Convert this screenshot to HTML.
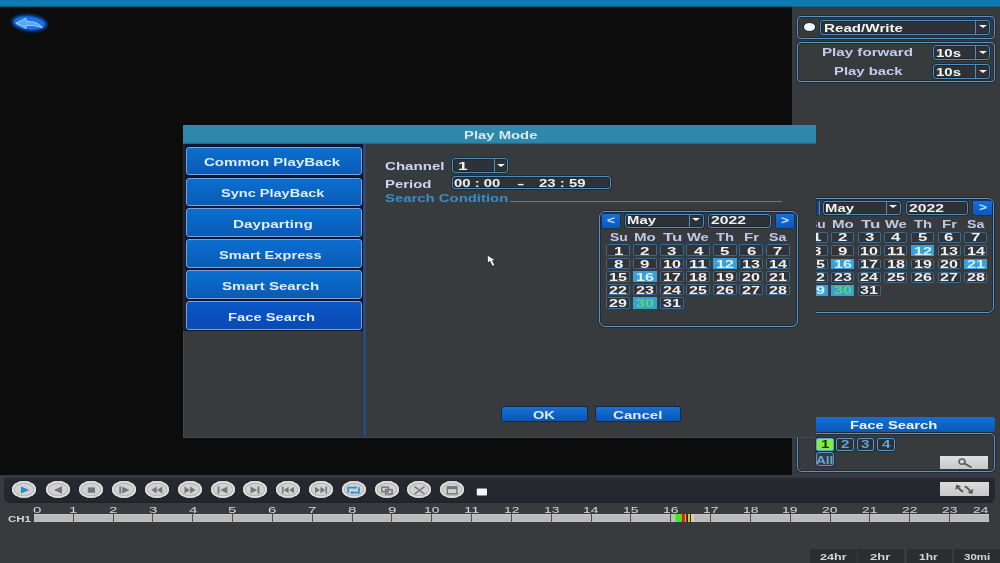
<!DOCTYPE html>
<html><head><meta charset="utf-8">
<style>
*{margin:0;padding:0;box-sizing:border-box}
html,body{width:1000px;height:563px;overflow:hidden;background:#0c0c0c;font-family:"Liberation Sans",sans-serif}
div,span{position:absolute}
.t{white-space:nowrap;line-height:1;transform-origin:0 0}
.bx{border:1.5px solid #5e94c0;border-radius:4px;box-shadow:0 0 0 1px rgba(14,30,52,.55),inset 0 0 0 1px rgba(14,30,52,.55)}
.dd{border:1.5px solid #4f8dbc;border-radius:3px;background:#2e3135;box-shadow:0 0 0 1px rgba(14,30,52,.55),inset 0 0 0 1px rgba(14,30,52,.5)}
.sep{width:1.2px;background:#4f8dbc}
.arr{width:0;height:0;border-left:4.2px solid transparent;border-right:4.2px solid transparent;border-top:3.6px solid #f4f4f4}
.btn{border:1px solid #7ea2d6;border-radius:3px;background:linear-gradient(#0b6fd0,#0a5bb5)}
.cb{background:linear-gradient(#1670d8,#0a58c0);border-radius:1px;box-shadow:0 0 0 .6px #0a2850}
.cell{border:1px solid #3a6a92;border-radius:1.5px;background:#303337}
.hl{background:#3a9ed8;border-color:#3a9ed8;border-radius:0}
.ell{border-radius:50%;background:#d2d2d2;box-shadow:inset 0 0 0 1.8px #dedede, inset 0 0 0 2.8px #b2b2b2, 0 0 1px #000}
#wrap{left:0;top:0;width:1000px;height:563px;overflow:hidden;filter:blur(0.3px)}
</style></head><body><div id="wrap">

<div style="left:792px;top:0;width:208px;height:563px;background:#383b3e"></div>
<div style="left:0;top:0;width:1000px;height:9px;background:linear-gradient(#0d7bb0 0,#0d7bb0 5.3px,rgba(26,114,160,.85) 6.3px,rgba(20,60,90,.35) 7.5px,rgba(12,12,12,0) 8.5px)"></div>
<div style="left:0;top:475px;width:1000px;height:88px;background:#383b3e"></div>
<svg style="position:absolute;left:0;top:0" width="60" height="45" viewBox="0 0 60 45">
<defs><filter id="bl" x="-50%" y="-50%" width="200%" height="200%"><feGaussianBlur stdDeviation="1.8"/></filter></defs>
<ellipse cx="29.5" cy="23" rx="17.5" ry="7.8" fill="#1060d8" filter="url(#bl)" transform="rotate(6 29.5 23)"/>
<ellipse cx="29.5" cy="23" rx="15" ry="6.4" fill="#1a70ea" transform="rotate(6 29.5 23)"/>
<path d="M15.8 23.2 L26 18.2 L26 21.2 Q37.5 21 42.4 27.6 Q36 25 26 25.4 L26 28.4 Z" fill="#58a8f4" stroke="#a8d6ff" stroke-width="0.9" stroke-linejoin="round"/>
</svg>
<div class="bx" style="left:797px;top:15.5px;width:197.5px;height:23.5px"></div>
<div style="left:803.6px;top:23.4px;width:11.2px;height:7.8px;border-radius:50%;background:radial-gradient(#f4fbff 40%,#c8ecff);box-shadow:0 0 0 1px #12283c"></div>
<div class="dd" style="left:820px;top:20px;width:170px;height:15px"></div>
<div class="sep" style="left:975px;top:20px;height:15px"></div>
<div class="arr" style="left:978.8px;top:24.9px"></div>
<span class="t" style="left:823.60px;top:22.99px;font-size:11px;font-weight:bold;color:#f4f4f4;transform:scaleX(1.3798);">Read/Write</span>
<div class="bx" style="left:797px;top:42.4px;width:197.5px;height:40px"></div>
<span class="t" style="left:821.60px;top:47.39px;font-size:11px;font-weight:bold;color:#c4cbee;transform:scaleX(1.3768);">Play forward</span>
<span class="t" style="left:833.50px;top:66.09px;font-size:11px;font-weight:bold;color:#c4cbee;transform:scaleX(1.3515);">Play back</span>
<div class="dd" style="left:933.4px;top:44.8px;width:56.6px;height:15px"></div>
<div class="sep" style="left:975px;top:44.8px;height:15px"></div>
<div class="arr" style="left:978.8px;top:51.0px"></div>
<div class="dd" style="left:933.4px;top:64px;width:56.6px;height:15px"></div>
<div class="sep" style="left:975px;top:64px;height:15px"></div>
<div class="arr" style="left:978.8px;top:70.2px"></div>
<span class="t" style="left:936.00px;top:47.59px;font-size:11px;font-weight:bold;color:#f4f4f4;transform:scaleX(1.3622);">10s</span>
<span class="t" style="left:936.00px;top:66.79px;font-size:11px;font-weight:bold;color:#f4f4f4;transform:scaleX(1.3622);">10s</span>
<div class="bx" style="left:797px;top:198.3px;width:197.29999999999995px;height:114.69999999999999px;border-radius:6px"></div>
<div class="cb" style="left:800px;top:200.7px;width:19.5px;height:14.300000000000011px"></div>
<div class="cb" style="left:973px;top:200.7px;width:19.200000000000045px;height:14.300000000000011px"></div>
<div class="dd" style="left:823.3px;top:200.7px;width:77.70000000000005px;height:14.300000000000011px"></div>
<div class="sep" style="left:886px;top:200.7px;height:14.300000000000011px"></div>
<div class="arr" style="left:889.3px;top:205.45px"></div>
<div class="dd" style="left:905.9px;top:200.7px;width:62.30000000000007px;height:14.300000000000011px"></div>
<span class="t" style="left:805.75px;top:203.08px;font-size:10px;font-weight:bold;color:#c8e4ff;transform:scaleX(1.3699);">&lt;</span>
<span class="t" style="left:978.60px;top:203.08px;font-size:10px;font-weight:bold;color:#c8e4ff;transform:scaleX(1.3699);">&gt;</span>
<span class="t" style="left:825.10px;top:202.54px;font-size:11px;font-weight:bold;color:#f2f2f2;transform:scaleX(1.3506);">May</span>
<span class="t" style="left:908.70px;top:202.54px;font-size:11px;font-weight:bold;color:#f2f2f2;transform:scaleX(1.4262);">2022</span>
<span class="t" style="left:808.00px;top:219.29px;font-size:11px;font-weight:bold;color:#c0c8ea;transform:scaleX(1.2592);">Su</span>
<span class="t" style="left:832.40px;top:219.29px;font-size:11px;font-weight:bold;color:#c0c8ea;transform:scaleX(1.3726);">Mo</span>
<span class="t" style="left:860.80px;top:219.29px;font-size:11px;font-weight:bold;color:#c0c8ea;transform:scaleX(1.5370);">Tu</span>
<span class="t" style="left:885.20px;top:219.29px;font-size:11px;font-weight:bold;color:#c0c8ea;transform:scaleX(1.3373);">We</span>
<span class="t" style="left:913.70px;top:219.29px;font-size:11px;font-weight:bold;color:#c0c8ea;transform:scaleX(1.3469);">Th</span>
<span class="t" style="left:941.80px;top:219.29px;font-size:11px;font-weight:bold;color:#c0c8ea;transform:scaleX(1.3636);">Fr</span>
<span class="t" style="left:966.60px;top:219.29px;font-size:11px;font-weight:bold;color:#c0c8ea;transform:scaleX(1.2858);">Sa</span>
<div class="cell" style="left:804.80px;top:232.10px;width:23px;height:10.6px"></div>
<span class="t" style="left:811.60px;top:232.21px;font-size:10.5px;font-weight:bold;color:#f0f0f0;transform:scaleX(1.6097);">1</span>
<div class="cell" style="left:831.34px;top:232.10px;width:23px;height:10.6px"></div>
<span class="t" style="left:838.14px;top:232.21px;font-size:10.5px;font-weight:bold;color:#f0f0f0;transform:scaleX(1.6097);">2</span>
<div class="cell" style="left:857.88px;top:232.10px;width:23px;height:10.6px"></div>
<span class="t" style="left:864.68px;top:232.21px;font-size:10.5px;font-weight:bold;color:#f0f0f0;transform:scaleX(1.6097);">3</span>
<div class="cell" style="left:884.42px;top:232.10px;width:23px;height:10.6px"></div>
<span class="t" style="left:891.22px;top:232.21px;font-size:10.5px;font-weight:bold;color:#f0f0f0;transform:scaleX(1.6097);">4</span>
<div class="cell" style="left:910.96px;top:232.10px;width:23px;height:10.6px"></div>
<span class="t" style="left:917.76px;top:232.21px;font-size:10.5px;font-weight:bold;color:#f0f0f0;transform:scaleX(1.6097);">5</span>
<div class="cell" style="left:937.50px;top:232.10px;width:23px;height:10.6px"></div>
<span class="t" style="left:944.30px;top:232.21px;font-size:10.5px;font-weight:bold;color:#f0f0f0;transform:scaleX(1.6097);">6</span>
<div class="cell" style="left:964.04px;top:232.10px;width:23px;height:10.6px"></div>
<span class="t" style="left:970.84px;top:232.21px;font-size:10.5px;font-weight:bold;color:#f0f0f0;transform:scaleX(1.6097);">7</span>
<div class="cell" style="left:804.80px;top:245.40px;width:23px;height:10.6px"></div>
<span class="t" style="left:811.60px;top:245.51px;font-size:10.5px;font-weight:bold;color:#f0f0f0;transform:scaleX(1.6097);">8</span>
<div class="cell" style="left:831.34px;top:245.40px;width:23px;height:10.6px"></div>
<span class="t" style="left:838.14px;top:245.51px;font-size:10.5px;font-weight:bold;color:#f0f0f0;transform:scaleX(1.6097);">9</span>
<div class="cell" style="left:857.88px;top:245.40px;width:23px;height:10.6px"></div>
<span class="t" style="left:860.43px;top:245.51px;font-size:10.5px;font-weight:bold;color:#f0f0f0;transform:scaleX(1.5326);">10</span>
<div class="cell" style="left:884.42px;top:245.40px;width:23px;height:10.6px"></div>
<span class="t" style="left:886.97px;top:245.51px;font-size:10.5px;font-weight:bold;color:#f0f0f0;transform:scaleX(1.6126);">11</span>
<div class="cell hl" style="left:910.96px;top:245.40px;width:23px;height:10.6px"></div>
<span class="t" style="left:913.51px;top:245.51px;font-size:10.5px;font-weight:bold;color:#d4f2ff;transform:scaleX(1.5326);">12</span>
<div class="cell" style="left:937.50px;top:245.40px;width:23px;height:10.6px"></div>
<span class="t" style="left:940.05px;top:245.51px;font-size:10.5px;font-weight:bold;color:#f0f0f0;transform:scaleX(1.5326);">13</span>
<div class="cell" style="left:964.04px;top:245.40px;width:23px;height:10.6px"></div>
<span class="t" style="left:966.59px;top:245.51px;font-size:10.5px;font-weight:bold;color:#f0f0f0;transform:scaleX(1.5326);">14</span>
<div class="cell" style="left:804.80px;top:258.70px;width:23px;height:10.6px"></div>
<span class="t" style="left:807.35px;top:258.81px;font-size:10.5px;font-weight:bold;color:#f0f0f0;transform:scaleX(1.5326);">15</span>
<div class="cell hl" style="left:831.34px;top:258.70px;width:23px;height:10.6px"></div>
<span class="t" style="left:833.89px;top:258.81px;font-size:10.5px;font-weight:bold;color:#d4f2ff;transform:scaleX(1.5326);">16</span>
<div class="cell" style="left:857.88px;top:258.70px;width:23px;height:10.6px"></div>
<span class="t" style="left:860.43px;top:258.81px;font-size:10.5px;font-weight:bold;color:#f0f0f0;transform:scaleX(1.5326);">17</span>
<div class="cell" style="left:884.42px;top:258.70px;width:23px;height:10.6px"></div>
<span class="t" style="left:886.97px;top:258.81px;font-size:10.5px;font-weight:bold;color:#f0f0f0;transform:scaleX(1.5326);">18</span>
<div class="cell" style="left:910.96px;top:258.70px;width:23px;height:10.6px"></div>
<span class="t" style="left:913.51px;top:258.81px;font-size:10.5px;font-weight:bold;color:#f0f0f0;transform:scaleX(1.5326);">19</span>
<div class="cell" style="left:937.50px;top:258.70px;width:23px;height:10.6px"></div>
<span class="t" style="left:940.05px;top:258.81px;font-size:10.5px;font-weight:bold;color:#f0f0f0;transform:scaleX(1.5326);">20</span>
<div class="cell hl" style="left:964.04px;top:258.70px;width:23px;height:10.6px"></div>
<span class="t" style="left:966.59px;top:258.81px;font-size:10.5px;font-weight:bold;color:#d4f2ff;transform:scaleX(1.5326);">21</span>
<div class="cell" style="left:804.80px;top:272.00px;width:23px;height:10.6px"></div>
<span class="t" style="left:807.35px;top:272.11px;font-size:10.5px;font-weight:bold;color:#f0f0f0;transform:scaleX(1.5326);">22</span>
<div class="cell" style="left:831.34px;top:272.00px;width:23px;height:10.6px"></div>
<span class="t" style="left:833.89px;top:272.11px;font-size:10.5px;font-weight:bold;color:#f0f0f0;transform:scaleX(1.5326);">23</span>
<div class="cell" style="left:857.88px;top:272.00px;width:23px;height:10.6px"></div>
<span class="t" style="left:860.43px;top:272.11px;font-size:10.5px;font-weight:bold;color:#f0f0f0;transform:scaleX(1.5326);">24</span>
<div class="cell" style="left:884.42px;top:272.00px;width:23px;height:10.6px"></div>
<span class="t" style="left:886.97px;top:272.11px;font-size:10.5px;font-weight:bold;color:#f0f0f0;transform:scaleX(1.5326);">25</span>
<div class="cell" style="left:910.96px;top:272.00px;width:23px;height:10.6px"></div>
<span class="t" style="left:913.51px;top:272.11px;font-size:10.5px;font-weight:bold;color:#f0f0f0;transform:scaleX(1.5326);">26</span>
<div class="cell" style="left:937.50px;top:272.00px;width:23px;height:10.6px"></div>
<span class="t" style="left:940.05px;top:272.11px;font-size:10.5px;font-weight:bold;color:#f0f0f0;transform:scaleX(1.5326);">27</span>
<div class="cell" style="left:964.04px;top:272.00px;width:23px;height:10.6px"></div>
<span class="t" style="left:966.59px;top:272.11px;font-size:10.5px;font-weight:bold;color:#f0f0f0;transform:scaleX(1.5326);">28</span>
<div class="cell hl" style="left:804.80px;top:285.30px;width:23px;height:10.6px"></div>
<span class="t" style="left:807.35px;top:285.41px;font-size:10.5px;font-weight:bold;color:#d4f2ff;transform:scaleX(1.5326);">29</span>
<div class="cell hl" style="left:831.34px;top:285.30px;width:23px;height:10.6px"></div>
<span class="t" style="left:833.89px;top:285.41px;font-size:10.5px;font-weight:bold;color:#5cd86c;transform:scaleX(1.5326);">30</span>
<div class="cell" style="left:857.88px;top:285.30px;width:23px;height:10.6px"></div>
<span class="t" style="left:860.43px;top:285.41px;font-size:10.5px;font-weight:bold;color:#f0f0f0;transform:scaleX(1.5326);">31</span>
<div style="left:816px;top:200.7px;width:3.6px;height:14.3px;background:linear-gradient(90deg,#1a2c50,#1f4c8c);border-right:1px solid #4a88c0"></div>
<div class="bx" style="left:797px;top:433.2px;width:197.7px;height:38.8px;border-radius:5px"></div>
<div style="left:816px;top:417px;width:178.5px;height:14.7px;border-radius:0 2px 2px 0;background:linear-gradient(#1470d2,#0a58b8)"></div>
<span class="t" style="left:850.30px;top:420.19px;font-size:11px;font-weight:bold;color:#eef2fa;transform:scaleX(1.3484);">Face Search</span>
<div style="left:816px;top:438.3px;width:17.700000000000045px;height:12.5px;border:1.2px solid #5aa0d0;border-radius:2px;background:#84ec44;box-shadow:0 0 0 1px rgba(14,30,52,.5)"></div>
<span class="t" style="left:820.65px;top:439.84px;font-size:10px;font-weight:bold;color:#124010;transform:scaleX(1.5104);">1</span>
<div style="left:836.3px;top:438.3px;width:17.90000000000009px;height:12.5px;border:1.2px solid #5a98c8;border-radius:2px;background:#2d3034;box-shadow:0 0 0 1px rgba(14,30,52,.5)"></div>
<span class="t" style="left:841.05px;top:439.84px;font-size:10px;font-weight:bold;color:#62a4d6;transform:scaleX(1.5104);">2</span>
<div style="left:856.6px;top:438.3px;width:17.899999999999977px;height:12.5px;border:1.2px solid #5a98c8;border-radius:2px;background:#2d3034;box-shadow:0 0 0 1px rgba(14,30,52,.5)"></div>
<span class="t" style="left:861.35px;top:439.84px;font-size:10px;font-weight:bold;color:#62a4d6;transform:scaleX(1.5104);">3</span>
<div style="left:876.8px;top:438.3px;width:18.40000000000009px;height:12.5px;border:1.2px solid #5a98c8;border-radius:2px;background:#2d3034;box-shadow:0 0 0 1px rgba(14,30,52,.5)"></div>
<span class="t" style="left:881.80px;top:439.84px;font-size:10px;font-weight:bold;color:#62a4d6;transform:scaleX(1.5104);">4</span>
<div style="left:816px;top:451.9px;width:18px;height:14.1px;border:1.2px solid #5a98c8;border-radius:3px;box-shadow:0 0 0 1px rgba(14,30,52,.5)"></div>
<span class="t" style="left:816.30px;top:454.61px;font-size:10.5px;font-weight:bold;color:#62a4d6;transform:scaleX(1.2968);">All</span>
<div style="left:939.7px;top:455.6px;width:48px;height:13.7px;background:linear-gradient(#e0e0e0,#c8c8c8)"></div>
<svg style="position:absolute;left:955px;top:455px" width="20" height="15" viewBox="955 455 20 15"><ellipse cx="962" cy="461.6" rx="3" ry="2.6" fill="none" stroke="#5c5c5c" stroke-width="1.5"/><path d="M964.6 463.6 L970.8 467" stroke="#5c5c5c" stroke-width="1.8" stroke-linecap="round"/></svg>
<div style="left:183px;top:125px;width:633px;height:312.8px;background:#383b3e;box-shadow:inset 1px -1px 0 #45474c"></div>
<div style="left:183px;top:124.5px;width:633px;height:19.5px;background:linear-gradient(#3a88a8 0,#2e88ab 1.2px,#2e88ab 17px,#1c5a84 19.5px)"></div>
<span class="t" style="left:463.90px;top:130.37px;font-size:11.5px;font-weight:bold;color:#d8e8f4;transform:scaleX(1.2905);">Play Mode</span>
<div style="left:362px;top:144px;width:4px;height:292px;background:linear-gradient(90deg,#1c2c48,#34507a 55%,#2c4262)"></div>
<div style="left:183px;top:143.5px;width:179.5px;height:187px;background:linear-gradient(90deg,#26282c 0,#1c2030 2px,#0e1632 3px);border-radius:0 0 2px 0"></div>
<div class="btn" style="left:186px;top:146.7px;width:176px;height:28.5px;background:linear-gradient(#0b6fd0,#0a5bb5)"></div>
<span class="t" style="left:204.20px;top:157.02px;font-size:11.5px;font-weight:bold;color:#dceeff;transform:scaleX(1.3074);">Common PlayBack</span>
<div class="btn" style="left:186px;top:177.7px;width:176px;height:28.0px;background:linear-gradient(#0b6fd0,#0a5bb5)"></div>
<span class="t" style="left:221.10px;top:187.77px;font-size:11.5px;font-weight:bold;color:#dceeff;transform:scaleX(1.2636);">Sync PlayBack</span>
<div class="btn" style="left:186px;top:208.4px;width:176px;height:28.400000000000006px;background:linear-gradient(#0b6fd0,#0a5bb5)"></div>
<span class="t" style="left:232.80px;top:218.67px;font-size:11.5px;font-weight:bold;color:#dceeff;transform:scaleX(1.3269);">Dayparting</span>
<div class="btn" style="left:186px;top:239.4px;width:176px;height:28.400000000000006px;background:linear-gradient(#0b6fd0,#0a5bb5)"></div>
<span class="t" style="left:219.40px;top:249.67px;font-size:11.5px;font-weight:bold;color:#dceeff;transform:scaleX(1.2738);">Smart Express</span>
<div class="btn" style="left:186px;top:270.4px;width:176px;height:28.400000000000034px;background:linear-gradient(#0b6fd0,#0a5bb5)"></div>
<span class="t" style="left:221.90px;top:280.67px;font-size:11.5px;font-weight:bold;color:#dceeff;transform:scaleX(1.3109);">Smart Search</span>
<div class="btn" style="left:186px;top:301.4px;width:176px;height:28.200000000000045px;background:linear-gradient(#0a56c6,#0a4ab4)"></div>
<span class="t" style="left:227.90px;top:311.57px;font-size:11.5px;font-weight:bold;color:#dceeff;transform:scaleX(1.2839);">Face Search</span>
<span class="t" style="left:384.90px;top:160.79px;font-size:11px;font-weight:bold;color:#d0d4f0;transform:scaleX(1.3712);">Channel</span>
<span class="t" style="left:384.90px;top:178.59px;font-size:11px;font-weight:bold;color:#d0d4f0;transform:scaleX(1.3585);">Period</span>
<span class="t" style="left:384.90px;top:192.89px;font-size:11px;font-weight:bold;color:#3a8cc4;transform:scaleX(1.3540);">Search Condition</span>
<div style="left:510px;top:200.5px;width:272px;height:1.5px;background:#3f86b8"></div>
<div class="dd" style="left:452px;top:158.4px;width:56px;height:14.6px"></div>
<div class="sep" style="left:493.6px;top:158.4px;height:14.6px"></div>
<div class="arr" style="left:496.6px;top:163.9px"></div>
<span class="t" style="left:457.80px;top:160.59px;font-size:11px;font-weight:bold;color:#f2f2f2;transform:scaleX(1.5692);">1</span>
<div class="dd" style="left:452px;top:176.2px;width:159.3px;height:12.8px"></div>
<span class="t" style="left:454.40px;top:178.09px;font-size:11px;font-weight:bold;color:#f2f2f2;transform:scaleX(1.3491);">00 : 00</span>
<span class="t" style="left:517.00px;top:178.09px;font-size:11px;font-weight:bold;color:#f2f2f2;transform:scaleX(2.0202);">-</span>
<span class="t" style="left:539.10px;top:178.09px;font-size:11px;font-weight:bold;color:#f2f2f2;transform:scaleX(1.3578);">23 : 59</span>
<div class="bx" style="left:599.2px;top:210.6px;width:198.39999999999998px;height:116.4px;border-radius:6px"></div>
<div class="cb" style="left:602.2px;top:214px;width:18.0px;height:13.800000000000011px"></div>
<div class="cb" style="left:775.7px;top:214px;width:18.699999999999932px;height:13.5px"></div>
<div class="dd" style="left:625px;top:214px;width:78.60000000000002px;height:13.5px"></div>
<div class="sep" style="left:688.6px;top:214px;height:13.5px"></div>
<div class="arr" style="left:691.9px;top:218.35px"></div>
<div class="dd" style="left:707.8px;top:214px;width:63.200000000000045px;height:13.5px"></div>
<span class="t" style="left:607.20px;top:215.98px;font-size:10px;font-weight:bold;color:#c8e4ff;transform:scaleX(1.3699);">&lt;</span>
<span class="t" style="left:781.05px;top:215.98px;font-size:10px;font-weight:bold;color:#c8e4ff;transform:scaleX(1.3699);">&gt;</span>
<span class="t" style="left:626.80px;top:215.44px;font-size:11px;font-weight:bold;color:#f2f2f2;transform:scaleX(1.3506);">May</span>
<span class="t" style="left:710.60px;top:215.44px;font-size:11px;font-weight:bold;color:#f2f2f2;transform:scaleX(1.4262);">2022</span>
<span class="t" style="left:609.60px;top:232.29px;font-size:11px;font-weight:bold;color:#c0c8ea;transform:scaleX(1.2592);">Su</span>
<span class="t" style="left:634.10px;top:232.29px;font-size:11px;font-weight:bold;color:#c0c8ea;transform:scaleX(1.3726);">Mo</span>
<span class="t" style="left:662.60px;top:232.29px;font-size:11px;font-weight:bold;color:#c0c8ea;transform:scaleX(1.5370);">Tu</span>
<span class="t" style="left:687.10px;top:232.29px;font-size:11px;font-weight:bold;color:#c0c8ea;transform:scaleX(1.3373);">We</span>
<span class="t" style="left:715.70px;top:232.29px;font-size:11px;font-weight:bold;color:#c0c8ea;transform:scaleX(1.3469);">Th</span>
<span class="t" style="left:743.90px;top:232.29px;font-size:11px;font-weight:bold;color:#c0c8ea;transform:scaleX(1.3636);">Fr</span>
<span class="t" style="left:768.80px;top:232.29px;font-size:11px;font-weight:bold;color:#c0c8ea;transform:scaleX(1.2858);">Sa</span>
<div class="cell" style="left:606.40px;top:244.40px;width:24px;height:11.6px"></div>
<span class="t" style="left:613.70px;top:245.51px;font-size:10.5px;font-weight:bold;color:#f0f0f0;transform:scaleX(1.6097);">1</span>
<div class="cell" style="left:633.00px;top:244.40px;width:24px;height:11.6px"></div>
<span class="t" style="left:640.30px;top:245.51px;font-size:10.5px;font-weight:bold;color:#f0f0f0;transform:scaleX(1.6097);">2</span>
<div class="cell" style="left:659.60px;top:244.40px;width:24px;height:11.6px"></div>
<span class="t" style="left:666.90px;top:245.51px;font-size:10.5px;font-weight:bold;color:#f0f0f0;transform:scaleX(1.6097);">3</span>
<div class="cell" style="left:686.20px;top:244.40px;width:24px;height:11.6px"></div>
<span class="t" style="left:693.50px;top:245.51px;font-size:10.5px;font-weight:bold;color:#f0f0f0;transform:scaleX(1.6097);">4</span>
<div class="cell" style="left:712.80px;top:244.40px;width:24px;height:11.6px"></div>
<span class="t" style="left:720.10px;top:245.51px;font-size:10.5px;font-weight:bold;color:#f0f0f0;transform:scaleX(1.6097);">5</span>
<div class="cell" style="left:739.40px;top:244.40px;width:24px;height:11.6px"></div>
<span class="t" style="left:746.70px;top:245.51px;font-size:10.5px;font-weight:bold;color:#f0f0f0;transform:scaleX(1.6097);">6</span>
<div class="cell" style="left:766.00px;top:244.40px;width:24px;height:11.6px"></div>
<span class="t" style="left:773.30px;top:245.51px;font-size:10.5px;font-weight:bold;color:#f0f0f0;transform:scaleX(1.6097);">7</span>
<div class="cell" style="left:606.40px;top:257.55px;width:24px;height:11.6px"></div>
<span class="t" style="left:613.70px;top:258.66px;font-size:10.5px;font-weight:bold;color:#f0f0f0;transform:scaleX(1.6097);">8</span>
<div class="cell" style="left:633.00px;top:257.55px;width:24px;height:11.6px"></div>
<span class="t" style="left:640.30px;top:258.66px;font-size:10.5px;font-weight:bold;color:#f0f0f0;transform:scaleX(1.6097);">9</span>
<div class="cell" style="left:659.60px;top:257.55px;width:24px;height:11.6px"></div>
<span class="t" style="left:662.65px;top:258.66px;font-size:10.5px;font-weight:bold;color:#f0f0f0;transform:scaleX(1.5326);">10</span>
<div class="cell" style="left:686.20px;top:257.55px;width:24px;height:11.6px"></div>
<span class="t" style="left:689.25px;top:258.66px;font-size:10.5px;font-weight:bold;color:#f0f0f0;transform:scaleX(1.6126);">11</span>
<div class="cell hl" style="left:712.80px;top:257.55px;width:24px;height:11.6px"></div>
<span class="t" style="left:715.85px;top:258.66px;font-size:10.5px;font-weight:bold;color:#d4f2ff;transform:scaleX(1.5326);">12</span>
<div class="cell" style="left:739.40px;top:257.55px;width:24px;height:11.6px"></div>
<span class="t" style="left:742.45px;top:258.66px;font-size:10.5px;font-weight:bold;color:#f0f0f0;transform:scaleX(1.5326);">13</span>
<div class="cell" style="left:766.00px;top:257.55px;width:24px;height:11.6px"></div>
<span class="t" style="left:769.05px;top:258.66px;font-size:10.5px;font-weight:bold;color:#f0f0f0;transform:scaleX(1.5326);">14</span>
<div class="cell" style="left:606.40px;top:270.70px;width:24px;height:11.6px"></div>
<span class="t" style="left:609.45px;top:271.81px;font-size:10.5px;font-weight:bold;color:#f0f0f0;transform:scaleX(1.5326);">15</span>
<div class="cell hl" style="left:633.00px;top:270.70px;width:24px;height:11.6px"></div>
<span class="t" style="left:636.05px;top:271.81px;font-size:10.5px;font-weight:bold;color:#d4f2ff;transform:scaleX(1.5326);">16</span>
<div class="cell" style="left:659.60px;top:270.70px;width:24px;height:11.6px"></div>
<span class="t" style="left:662.65px;top:271.81px;font-size:10.5px;font-weight:bold;color:#f0f0f0;transform:scaleX(1.5326);">17</span>
<div class="cell" style="left:686.20px;top:270.70px;width:24px;height:11.6px"></div>
<span class="t" style="left:689.25px;top:271.81px;font-size:10.5px;font-weight:bold;color:#f0f0f0;transform:scaleX(1.5326);">18</span>
<div class="cell" style="left:712.80px;top:270.70px;width:24px;height:11.6px"></div>
<span class="t" style="left:715.85px;top:271.81px;font-size:10.5px;font-weight:bold;color:#f0f0f0;transform:scaleX(1.5326);">19</span>
<div class="cell" style="left:739.40px;top:270.70px;width:24px;height:11.6px"></div>
<span class="t" style="left:742.45px;top:271.81px;font-size:10.5px;font-weight:bold;color:#f0f0f0;transform:scaleX(1.5326);">20</span>
<div class="cell" style="left:766.00px;top:270.70px;width:24px;height:11.6px"></div>
<span class="t" style="left:769.05px;top:271.81px;font-size:10.5px;font-weight:bold;color:#f0f0f0;transform:scaleX(1.5326);">21</span>
<div class="cell" style="left:606.40px;top:283.85px;width:24px;height:11.6px"></div>
<span class="t" style="left:609.45px;top:284.96px;font-size:10.5px;font-weight:bold;color:#f0f0f0;transform:scaleX(1.5326);">22</span>
<div class="cell" style="left:633.00px;top:283.85px;width:24px;height:11.6px"></div>
<span class="t" style="left:636.05px;top:284.96px;font-size:10.5px;font-weight:bold;color:#f0f0f0;transform:scaleX(1.5326);">23</span>
<div class="cell" style="left:659.60px;top:283.85px;width:24px;height:11.6px"></div>
<span class="t" style="left:662.65px;top:284.96px;font-size:10.5px;font-weight:bold;color:#f0f0f0;transform:scaleX(1.5326);">24</span>
<div class="cell" style="left:686.20px;top:283.85px;width:24px;height:11.6px"></div>
<span class="t" style="left:689.25px;top:284.96px;font-size:10.5px;font-weight:bold;color:#f0f0f0;transform:scaleX(1.5326);">25</span>
<div class="cell" style="left:712.80px;top:283.85px;width:24px;height:11.6px"></div>
<span class="t" style="left:715.85px;top:284.96px;font-size:10.5px;font-weight:bold;color:#f0f0f0;transform:scaleX(1.5326);">26</span>
<div class="cell" style="left:739.40px;top:283.85px;width:24px;height:11.6px"></div>
<span class="t" style="left:742.45px;top:284.96px;font-size:10.5px;font-weight:bold;color:#f0f0f0;transform:scaleX(1.5326);">27</span>
<div class="cell" style="left:766.00px;top:283.85px;width:24px;height:11.6px"></div>
<span class="t" style="left:769.05px;top:284.96px;font-size:10.5px;font-weight:bold;color:#f0f0f0;transform:scaleX(1.5326);">28</span>
<div class="cell" style="left:606.40px;top:297.00px;width:24px;height:11.6px"></div>
<span class="t" style="left:609.45px;top:298.11px;font-size:10.5px;font-weight:bold;color:#f0f0f0;transform:scaleX(1.5326);">29</span>
<div class="cell hl" style="left:633.00px;top:297.00px;width:24px;height:11.6px"></div>
<span class="t" style="left:636.05px;top:298.11px;font-size:10.5px;font-weight:bold;color:#5cd86c;transform:scaleX(1.5326);">30</span>
<div class="cell" style="left:659.60px;top:297.00px;width:24px;height:11.6px"></div>
<span class="t" style="left:662.65px;top:298.11px;font-size:10.5px;font-weight:bold;color:#f0f0f0;transform:scaleX(1.5326);">31</span>
<div style="left:502.4px;top:406.6px;width:84.20000000000005px;height:14.8px;border-radius:2px;background:linear-gradient(#1672d4,#0a56b4);box-shadow:0 0 0 1px #16284a"></div>
<span class="t" style="left:533.10px;top:409.59px;font-size:11px;font-weight:bold;color:#e2eaf6;transform:scaleX(1.3212);">OK</span>
<div style="left:595.8px;top:406.6px;width:84.20000000000005px;height:14.8px;border-radius:2px;background:linear-gradient(#1672d4,#0a56b4);box-shadow:0 0 0 1px #16284a"></div>
<span class="t" style="left:613.10px;top:409.59px;font-size:11px;font-weight:bold;color:#e2eaf6;transform:scaleX(1.3695);">Cancel</span>
<svg style="position:absolute;left:480px;top:248px" width="24" height="24" viewBox="480 248 24 24"><path d="M487.3 255 L487.5 263.4 L489.9 261.3 L492.3 266.3 L494.8 265.2 L492.5 260.5 L496.2 260.7 Z" fill="#f2f2f2" stroke="#1a1a1a" stroke-width="0.7" stroke-linejoin="round"/></svg>
<div style="left:3.5px;top:475.3px;width:991.5px;height:28.2px;border-radius:6px;background:linear-gradient(#3c3c48 0,#383944 2px,#2a2c35 3.5px,#262830 6px,#25272f 25px,#1f2127 28.2px)"></div>
<div class="ell" style="left:11.9px;top:481.3px;width:24.2px;height:17px"></div>
<div class="ell" style="left:46.2px;top:481.3px;width:24.2px;height:17px"></div>
<div class="ell" style="left:79.1px;top:481.3px;width:24.2px;height:17px"></div>
<div class="ell" style="left:112px;top:481.3px;width:24.2px;height:17px"></div>
<div class="ell" style="left:144.8px;top:481.3px;width:24.2px;height:17px"></div>
<div class="ell" style="left:177.7px;top:481.3px;width:24.2px;height:17px"></div>
<div class="ell" style="left:210.6px;top:481.3px;width:24.2px;height:17px"></div>
<div class="ell" style="left:243.1px;top:481.3px;width:24.2px;height:17px"></div>
<div class="ell" style="left:275.9px;top:481.3px;width:24.2px;height:17px"></div>
<div class="ell" style="left:308.8px;top:481.3px;width:24.2px;height:17px"></div>
<div class="ell" style="left:341.7px;top:481.3px;width:24.2px;height:17px"></div>
<div class="ell" style="left:374.5px;top:481.3px;width:24.2px;height:17px"></div>
<div class="ell" style="left:407.3px;top:481.3px;width:24.2px;height:17px"></div>
<div class="ell" style="left:439.9px;top:481.3px;width:24.2px;height:17px"></div>
<div style="left:939.5px;top:482px;width:49px;height:14.3px;background:linear-gradient(#dcdcdc,#c8c8c8)"></div>
<svg style="position:absolute;left:0;top:470px" width="1000" height="40" viewBox="0 470 1000 40">
<path d="M21 486.6 L29.2 490 L21 493.4 Z" fill="#1f8fc6"/>
<path d="M62 486.3 L54 490 L62 493.7 Z" fill="#767676"/>
<rect x="87.8" y="487.4" width="7.2" height="5.4" fill="#767676"/>
<rect x="119.3" y="486.4" width="1.8" height="7.2" fill="#767676"/><path d="M122.2 486.4 L129.4 490 L122.2 493.6 Z" fill="#767676"/>
<path d="M156.7 486.6 L151.3 490 L156.7 493.4 Z M162.3 486.6 L156.9 490 L162.3 493.4 Z" fill="#767676"/>
<path d="M184.5 486.6 L189.9 490 L184.5 493.4 Z M190.1 486.6 L195.5 490 L190.1 493.4 Z" fill="#767676"/>
<rect x="217.6" y="486.4" width="1.8" height="7.2" fill="#767676"/><path d="M227.4 486.4 L220.2 490 L227.4 493.6 Z" fill="#767676"/>
<path d="M250.6 486.6 L257.2 490 L250.6 493.4 Z" fill="#767676"/><rect x="257.6" y="486.4" width="1.8" height="7.2" fill="#767676"/>
<rect x="282" y="486.6" width="1.5" height="6.8" fill="#767676"/><path d="M288.6 486.8 L283.8 490 L288.6 493.2 Z M294 486.8 L289.2 490 L294 493.2 Z" fill="#767676"/>
<path d="M315 486.8 L319.8 490 L315 493.2 Z M320.4 486.8 L325.2 490 L320.4 493.2 Z" fill="#767676"/><rect x="325.5" y="486.6" width="1.5" height="6.8" fill="#767676"/>
<path d="M348.2 493 L348.2 487.6 L355.5 487.6 M359 487.2 L359 492.6 L351.8 492.6" fill="none" stroke="#2c8ed0" stroke-width="1.7"/>
<path d="M355 485.8 L357.2 487.6 L355 489.4 Z M352.4 490.8 L350.2 492.6 L352.4 494.4 Z" fill="#2c8ed0"/>
<rect x="381.8" y="487.2" width="6.5" height="4.6" fill="none" stroke="#767676" stroke-width="1.5"/><rect x="385.6" y="489.6" width="6.5" height="4.4" fill="none" stroke="#767676" stroke-width="1.5"/>
<path d="M414.5 486.6 L424.5 494 M424.5 486.6 L414.5 494" stroke="#767676" stroke-width="1.5"/>
<rect x="447.3" y="486.8" width="9.6" height="7" fill="none" stroke="#767676" stroke-width="1.4"/><rect x="447.3" y="486.8" width="9.6" height="2.4" fill="#767676"/>
<rect x="476.8" y="488.5" width="10.2" height="6.9" rx="0.8" fill="#f6f6f6"/>
<path d="M963 491.8 Q960.5 490.5 958.2 487.6" fill="none" stroke="#5a5a5a" stroke-width="2"/><path d="M955.2 490 L956.4 484.6 L961 486.2 Z" fill="#5a5a5a"/>
<path d="M964.8 486.4 Q968 487.8 970.2 491" fill="none" stroke="#5a5a5a" stroke-width="2"/><path d="M973.4 488.8 L972.2 494.2 L967.6 492.6 Z" fill="#5a5a5a"/>
</svg>
<div style="left:33.5px;top:514px;width:955.8px;height:8.4px;background:linear-gradient(#cbcbcb 0,#bcbcbc 1.5px,#b9b9b9 6.5px,#c6c6c6 8.4px)"></div>
<div style="left:72.83px;top:512.5px;width:1px;height:10px;background:#505050"></div>
<div style="left:112.65px;top:512.5px;width:1px;height:10px;background:#505050"></div>
<div style="left:152.48px;top:512.5px;width:1px;height:10px;background:#505050"></div>
<div style="left:192.30px;top:512.5px;width:1px;height:10px;background:#505050"></div>
<div style="left:232.12px;top:512.5px;width:1px;height:10px;background:#505050"></div>
<div style="left:271.95px;top:512.5px;width:1px;height:10px;background:#505050"></div>
<div style="left:311.78px;top:512.5px;width:1px;height:10px;background:#505050"></div>
<div style="left:351.60px;top:512.5px;width:1px;height:10px;background:#505050"></div>
<div style="left:391.43px;top:512.5px;width:1px;height:10px;background:#505050"></div>
<div style="left:431.25px;top:512.5px;width:1px;height:10px;background:#505050"></div>
<div style="left:471.08px;top:512.5px;width:1px;height:10px;background:#505050"></div>
<div style="left:510.90px;top:512.5px;width:1px;height:10px;background:#505050"></div>
<div style="left:550.73px;top:512.5px;width:1px;height:10px;background:#505050"></div>
<div style="left:590.55px;top:512.5px;width:1px;height:10px;background:#505050"></div>
<div style="left:630.38px;top:512.5px;width:1px;height:10px;background:#505050"></div>
<div style="left:670.20px;top:512.5px;width:1px;height:10px;background:#505050"></div>
<div style="left:710.03px;top:512.5px;width:1px;height:10px;background:#505050"></div>
<div style="left:749.85px;top:512.5px;width:1px;height:10px;background:#505050"></div>
<div style="left:789.68px;top:512.5px;width:1px;height:10px;background:#505050"></div>
<div style="left:829.50px;top:512.5px;width:1px;height:10px;background:#505050"></div>
<div style="left:869.33px;top:512.5px;width:1px;height:10px;background:#505050"></div>
<div style="left:909.15px;top:512.5px;width:1px;height:10px;background:#505050"></div>
<div style="left:948.98px;top:512.5px;width:1px;height:10px;background:#505050"></div>
<span class="t" style="left:32.80px;top:505.60px;font-size:8.5px;font-weight:normal;color:#d8d8d8;transform:scaleX(1.7769);">0</span>
<span class="t" style="left:69.12px;top:505.60px;font-size:8.5px;font-weight:normal;color:#d8d8d8;transform:scaleX(1.7769);">1</span>
<span class="t" style="left:108.95px;top:505.60px;font-size:8.5px;font-weight:normal;color:#d8d8d8;transform:scaleX(1.7769);">2</span>
<span class="t" style="left:148.78px;top:505.60px;font-size:8.5px;font-weight:normal;color:#d8d8d8;transform:scaleX(1.7769);">3</span>
<span class="t" style="left:188.60px;top:505.60px;font-size:8.5px;font-weight:normal;color:#d8d8d8;transform:scaleX(1.7769);">4</span>
<span class="t" style="left:228.43px;top:505.60px;font-size:8.5px;font-weight:normal;color:#d8d8d8;transform:scaleX(1.7769);">5</span>
<span class="t" style="left:268.25px;top:505.60px;font-size:8.5px;font-weight:normal;color:#d8d8d8;transform:scaleX(1.7769);">6</span>
<span class="t" style="left:308.08px;top:505.60px;font-size:8.5px;font-weight:normal;color:#d8d8d8;transform:scaleX(1.7769);">7</span>
<span class="t" style="left:347.90px;top:505.60px;font-size:8.5px;font-weight:normal;color:#d8d8d8;transform:scaleX(1.7769);">8</span>
<span class="t" style="left:387.73px;top:505.60px;font-size:8.5px;font-weight:normal;color:#d8d8d8;transform:scaleX(1.7769);">9</span>
<span class="t" style="left:424.05px;top:505.60px;font-size:8.5px;font-weight:normal;color:#d8d8d8;transform:scaleX(1.6288);">10</span>
<span class="t" style="left:463.88px;top:505.60px;font-size:8.5px;font-weight:normal;color:#d8d8d8;transform:scaleX(1.7453);">11</span>
<span class="t" style="left:503.70px;top:505.60px;font-size:8.5px;font-weight:normal;color:#d8d8d8;transform:scaleX(1.6288);">12</span>
<span class="t" style="left:543.52px;top:505.60px;font-size:8.5px;font-weight:normal;color:#d8d8d8;transform:scaleX(1.6288);">13</span>
<span class="t" style="left:583.35px;top:505.60px;font-size:8.5px;font-weight:normal;color:#d8d8d8;transform:scaleX(1.6288);">14</span>
<span class="t" style="left:623.17px;top:505.60px;font-size:8.5px;font-weight:normal;color:#d8d8d8;transform:scaleX(1.6288);">15</span>
<span class="t" style="left:663.00px;top:505.60px;font-size:8.5px;font-weight:normal;color:#d8d8d8;transform:scaleX(1.6288);">16</span>
<span class="t" style="left:702.83px;top:505.60px;font-size:8.5px;font-weight:normal;color:#d8d8d8;transform:scaleX(1.6288);">17</span>
<span class="t" style="left:742.65px;top:505.60px;font-size:8.5px;font-weight:normal;color:#d8d8d8;transform:scaleX(1.6288);">18</span>
<span class="t" style="left:782.48px;top:505.60px;font-size:8.5px;font-weight:normal;color:#d8d8d8;transform:scaleX(1.6288);">19</span>
<span class="t" style="left:822.30px;top:505.60px;font-size:8.5px;font-weight:normal;color:#d8d8d8;transform:scaleX(1.6288);">20</span>
<span class="t" style="left:862.12px;top:505.60px;font-size:8.5px;font-weight:normal;color:#d8d8d8;transform:scaleX(1.6288);">21</span>
<span class="t" style="left:901.95px;top:505.60px;font-size:8.5px;font-weight:normal;color:#d8d8d8;transform:scaleX(1.6288);">22</span>
<span class="t" style="left:941.77px;top:505.60px;font-size:8.5px;font-weight:normal;color:#d8d8d8;transform:scaleX(1.6288);">23</span>
<span class="t" style="left:973.30px;top:505.60px;font-size:8.5px;font-weight:normal;color:#d8d8d8;transform:scaleX(1.6288);">24</span>
<span class="t" style="left:7.70px;top:514.58px;font-size:9px;font-weight:bold;color:#d4d4d4;transform:scaleX(1.2775);">CH1</span>
<div style="left:673px;top:514.2px;width:21px;height:8.3px;background:linear-gradient(90deg,#c8c8c8 0,#98d890 1.5px,#60e040 3px,#40e828 3.5px,#40e828 8px,#a0b030 8.6px,#e01a08 9px,#e01a08 11.4px,#e0a048 11.8px,#e0b050 13px,#302a10 13.6px,#302a10 14.6px,#d8c83c 15px,#d8c83c 16.8px,#302a10 17.2px,#302a10 18px,#d8d070 18.4px,#d8d8a0 19.5px,#c8c8c8 21px)"></div>
<div style="left:810px;top:549.4px;width:47.200000000000045px;height:14px;background:#2b2d31"></div>
<div style="left:858.3px;top:549.4px;width:46.200000000000045px;height:14px;background:#2b2d31"></div>
<div style="left:906.6px;top:549.4px;width:45.19999999999993px;height:14px;background:#2b2d31"></div>
<div style="left:953.9px;top:549.4px;width:46.10000000000002px;height:14px;background:#2b2d31"></div>
<span class="t" style="left:819.80px;top:552.36px;font-size:9.5px;font-weight:bold;color:#d6d6d6;transform:scaleX(1.3256);">24hr</span>
<span class="t" style="left:870.20px;top:552.36px;font-size:9.5px;font-weight:bold;color:#d6d6d6;transform:scaleX(1.3732);">2hr</span>
<span class="t" style="left:919.10px;top:552.36px;font-size:9.5px;font-weight:bold;color:#d6d6d6;transform:scaleX(1.2582);">1hr</span>
<span class="t" style="left:963.70px;top:552.36px;font-size:9.5px;font-weight:bold;color:#d6d6d6;transform:scaleX(1.2100);">30mi</span>
</div></body></html>
